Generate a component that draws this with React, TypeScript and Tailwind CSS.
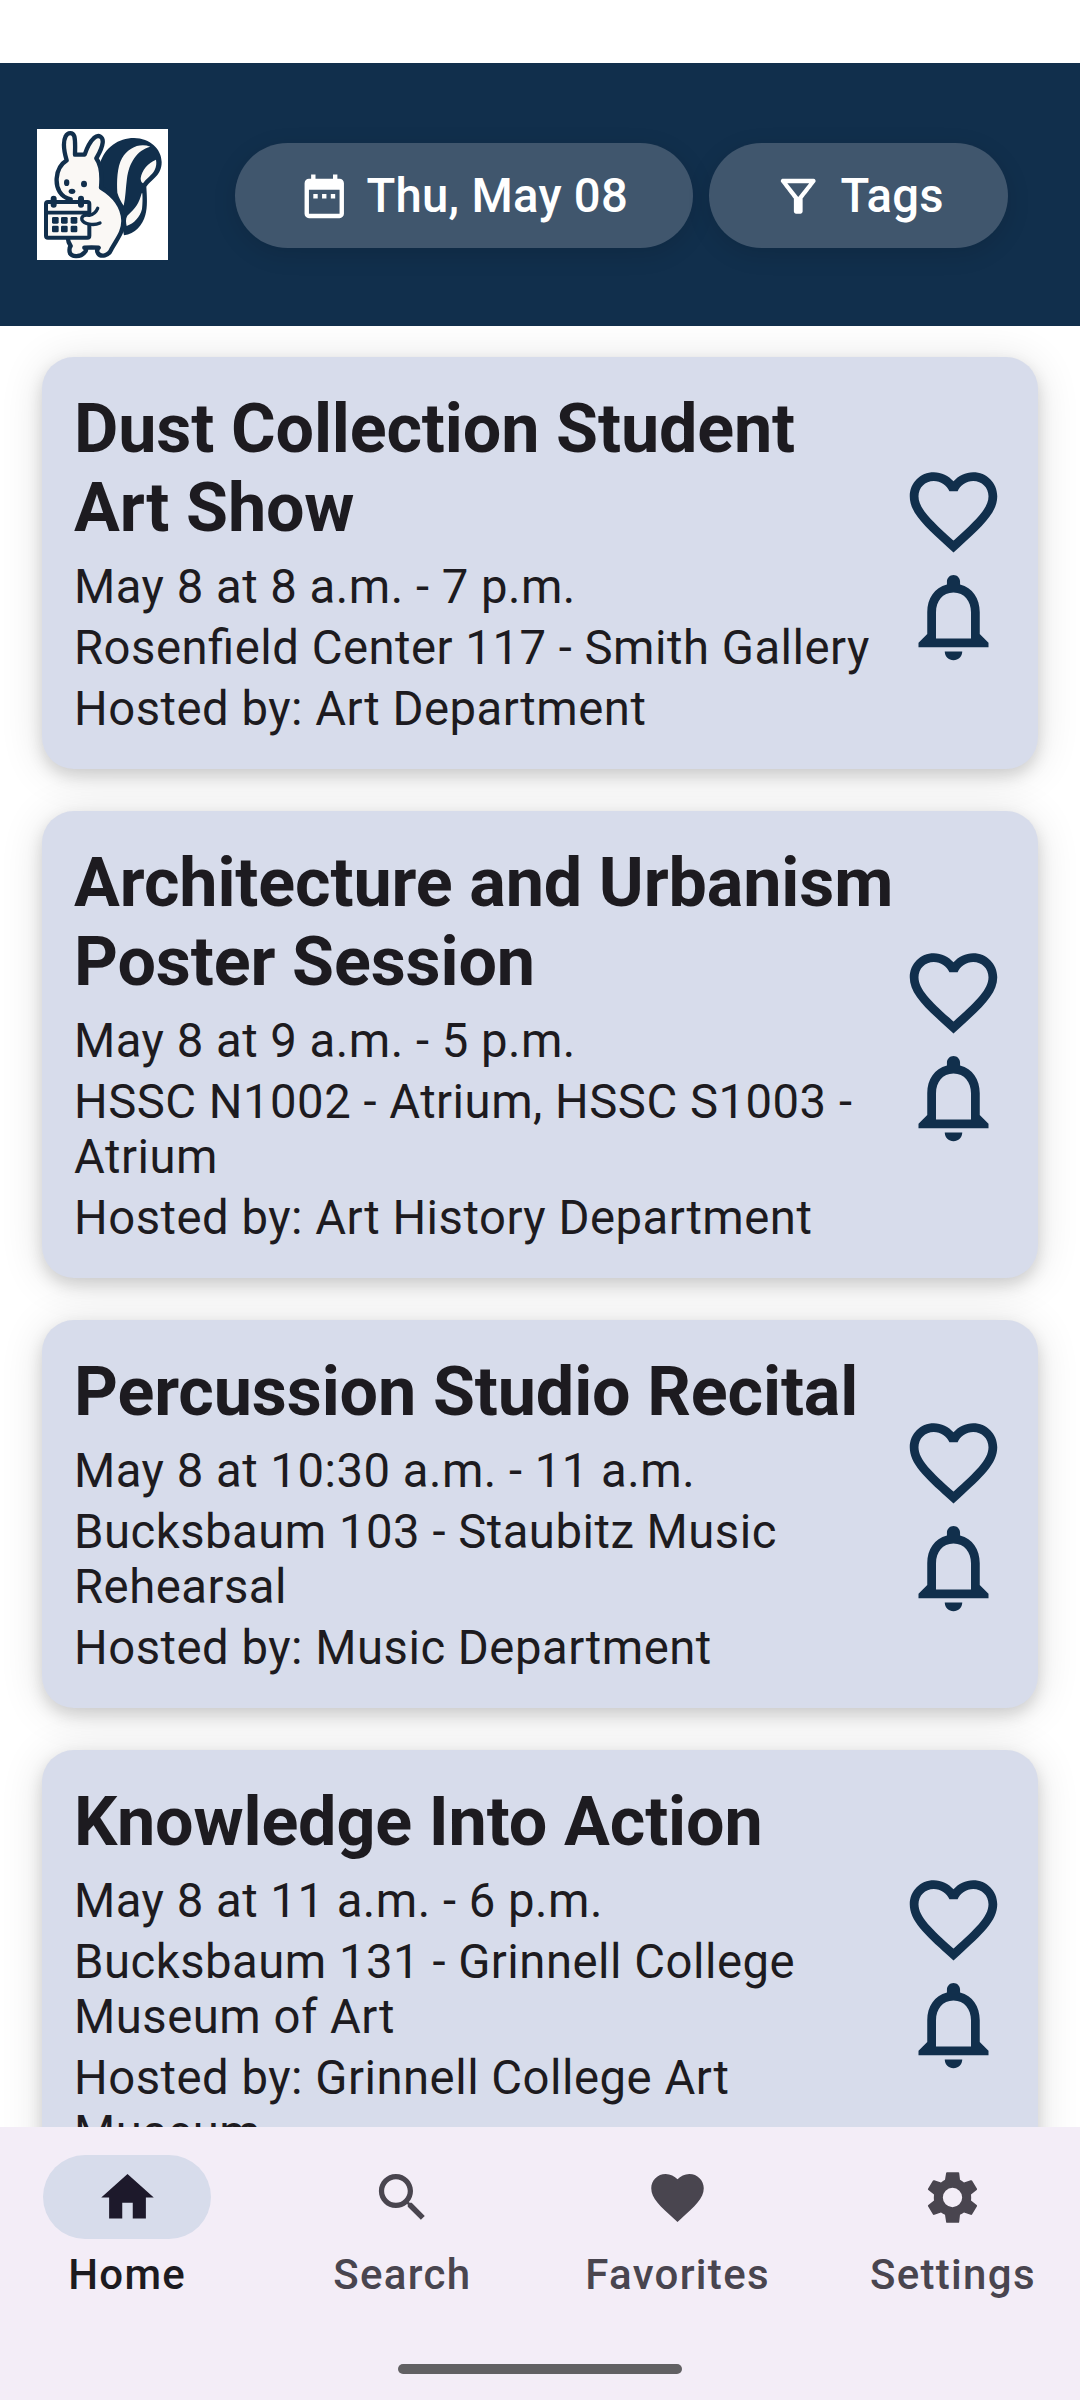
import { ReactNode } from 'react';

const NAVY = '#112f4c';

type Event = { title: string; time: string; place: string; host: string };

const events: Event[] = [
  {
    title: 'Dust Collection Student Art Show',
    time: 'May 8 at 8 a.m. - 7 p.m.',
    place: 'Rosenfield Center 117 - Smith Gallery',
    host: 'Hosted by: Art Department',
  },
  {
    title: 'Architecture and Urbanism Poster Session',
    time: 'May 8 at 9 a.m. - 5 p.m.',
    place: 'HSSC N1002 - Atrium, HSSC S1003 - Atrium',
    host: 'Hosted by: Art History Department',
  },
  {
    title: 'Percussion Studio Recital',
    time: 'May 8 at 10:30 a.m. - 11 a.m.',
    place: 'Bucksbaum 103 - Staubitz Music Rehearsal',
    host: 'Hosted by: Music Department',
  },
  {
    title: 'Knowledge Into Action',
    time: 'May 8 at 11 a.m. - 6 p.m.',
    place: 'Bucksbaum 131 - Grinnell College Museum of Art',
    host: 'Hosted by: Grinnell College Art Museum',
  },
];

function Icon({ d, className, viewBox = '0 0 24 24' }: { d: string; className: string; viewBox?: string }) {
  return (
    <svg viewBox={viewBox} fill="currentColor" fillRule="evenodd" className={className} aria-hidden="true">
      <path d={d} />
    </svg>
  );
}

const paths = {
  calendar:
    'M9 11H7v2h2v-2zm4 0h-2v2h2v-2zm4 0h-2v2h2v-2zm2-7h-1V2h-2v2H8V2H6v2H5c-1.11 0-1.99.9-1.99 2L3 20c0 1.1.89 2 2 2h14c1.1 0 2-.9 2-2V6c0-1.1-.9-2-2-2zm0 16H5V9h14v11z',
  filter:
    'M7 6h10l-5.01 6.3L7 6zm-2.75-.39C6.27 8.2 10 13 10 13v6c0 .55.45 1 1 1h2c.55 0 1-.45 1-1v-6s3.72-4.8 5.74-7.39A.998.998 0 0 0 18.95 4H5.04c-.83 0-1.3.95-.79 1.61z',
  heartOutline:
    'M16.5 3c-1.74 0-3.41.81-4.5 2.09C10.91 3.81 9.24 3 7.5 3 4.42 3 2 5.42 2 8.5c0 3.78 3.4 6.86 8.55 11.54L12 21.35l1.45-1.32C18.6 15.36 22 12.28 22 8.5 22 5.42 19.58 3 16.5 3zm-4.4 15.55-.1.1-.1-.1C7.14 14.24 4 11.39 4 8.5 4 6.5 5.5 5 7.5 5c1.54 0 3.04.99 3.57 2.36h1.87C13.46 5.99 14.96 5 16.5 5c2 0 3.5 1.5 3.5 3.5 0 2.89-3.14 5.74-7.9 10.05z',
  bell: 'M12 22c1.1 0 2-.9 2-2h-4c0 1.1.9 2 2 2zm6-6v-5c0-3.07-1.63-5.64-4.5-6.32V4c0-.83-.67-1.5-1.5-1.5s-1.5.67-1.5 1.5v.68C7.64 5.36 6 7.92 6 11v5l-2 2v1h16v-1l-2-2zm-2 1H8v-6c0-2.48 1.51-4.5 4-4.5s4 2.02 4 4.5v6z',
  home: 'M10 20v-6h4v6h5v-8h3L12 3 2 12h3v8z',
  search:
    'M15.5 14h-.79l-.28-.27C15.41 12.59 16 11.11 16 9.5 16 5.91 13.09 3 9.5 3S3 5.91 3 9.5 5.91 16 9.5 16c1.61 0 3.09-.59 4.23-1.57l.27.28v.79l5 4.99L20.49 19l-4.99-5zm-6 0C7.01 14 5 11.99 5 9.5S7.01 5 9.5 5 14 7.01 14 9.5 11.99 14 9.5 14z',
  heart:
    'M12 21.35l-1.45-1.32C5.4 15.36 2 12.28 2 8.5 2 5.42 4.42 3 7.5 3c1.74 0 3.41.81 4.5 2.09C13.09 3.81 14.76 3 16.5 3 19.58 3 22 5.42 22 8.5c0 3.78-3.4 6.86-8.55 11.54L12 21.35z',
  settings:
    'M141 66H175Q177 66 177.500 68L180 89Q186 92 192 97L212 90Q215 89.500 216 91L231 116Q232 118 230 119.500L213 133Q214 142 213 151L230 164.500Q232 166 231 168L216 193Q215 195 212 194L192 187Q186 191 180 194L177.500 216Q177 218 175 218H141Q139 218 138.500 216L135 194Q129 191 123 187L103 194Q100 195 99 193L84 168Q83 166 85 164.500L102 151Q101 142 102 133L85 119.500Q83 118 84 116L99 91Q100 89.500 103 90L123 97Q129 92 135 89L138.500 68Q139 66 141 66ZM157.500 113A29 29 0 1 0 157.500 171A29 29 0 1 0 157.500 113Z',
};

// Squirrel holding a calendar
function Logo() {
  const cream = '#faf8f5';
  return (
    <svg viewBox="51 57 393 393" className="size-[131px] shrink-0 bg-white" aria-label="Squirrel logo">
      <path
        d="M240 160C255 112 295 84 342 84C390 84 425 118 425 156C425 196 397 206 379 230C381 262 383 290 376 315C368 345 345 372 312 376L296 300L240 240Z"
        fill={NAVY}
      />
      <path d="M391 110C360 98 325 112 306 145C291 172 290 215 292 248C296 262 303 275 311 287C317 262 317 235 321 205C327 160 350 120 391 110Z" fill={cream} />
      <path d="M408 149C383 160 366 180 362 205C362 213 364 218 369 220C378 206 396 196 404 180C409 170 410 160 408 149Z" fill={cream} />
      <path d="M365 250C358 278 346 297 322 317C316 327 318 338 320 348C342 340 360 322 366 297C368 280 368 265 367 250Z" fill={cream} />
      <g fill={cream} stroke={NAVY} strokeWidth="13" strokeLinejoin="round" strokeLinecap="round">
        <path d="M140 151C132 124 127 98 137 79C143 66 159 66 163 79C167 96 165 116 165 134Q180 134 194 134C202 110 211 94 222 84C236 72 250 80 248 98C246 116 236 132 229 145C244 165 246 200 243 233C284 258 308 290 310 330C312 364 290 388 274 418C266 438 243 442 234 430Q228 421 236 413Q215 412 193 413Q204 418 193 428C182 442 152 442 149 426Q147 414 152 408Q144 396 143 382V290L152 268C122 262 108 236 110 205C112 178 122 162 140 151Z" />
        <rect x="78" y="276" width="130" height="107" rx="6" strokeWidth="12" />
        <path d="M78 308H206" strokeWidth="11" />
        <path d="M101 266V284M183 266V284" strokeWidth="18" />
      </g>
      <path d="M208 316C192 312 183 320 186 330C190 338 200 342 216 344V316Z" fill={cream} />
      <path
        d="M233 295C228 307 219 314 208 316C192 312 183 320 186 330C192 342 220 348 240 339"
        fill="none"
        stroke={NAVY}
        strokeWidth="10"
        strokeLinecap="round"
        strokeLinejoin="round"
      />
      <g fill={NAVY}>
        {[321, 347].map((y) =>
          [96, 123, 152].map((x) => <rect key={`${x}-${y}`} x={x} y={y} width="20" height="20" rx="4" />),
        )}
        <ellipse cx="140" cy="218" rx="8" ry="10" />
        <ellipse cx="192" cy="222" rx="9" ry="10" />
        <ellipse cx="156" cy="244" rx="10" ry="8" />
      </g>
    </svg>
  );
}

function PillButton({ icon, children, className }: { icon: string; children: ReactNode; className: string }) {
  return (
    <button
      className={`mt-px flex h-[105px] items-center rounded-full bg-[#40566d] pl-[63px] text-[47.25px] font-medium whitespace-nowrap text-white shadow-[0_6px_24px_rgba(0,0,0,0.12)] ${className}`}
    >
      <Icon d={icon} className="mt-[2px] size-[52.5px] shrink-0" />
      <span className="mt-[2px] ml-[16px] tracking-[0.26px]">{children}</span>
    </button>
  );
}

function EventCard({ event }: { event: Event }) {
  return (
    <article className="flex items-center justify-between rounded-[32px] bg-[#d7dceb] px-[32px] pt-[33px] pb-[32px] text-[#1d1b20] shadow-[0_7px_16px_rgba(0,0,0,0.14),0_4px_44px_rgba(0,0,0,0.12)]">
      <div className="flex w-[827px] flex-col gap-[6px] text-[47.25px] leading-[55px] tracking-[0.5px]">
        <h2 className="mb-[6px] text-[68.25px] leading-[79px] font-bold tracking-[-0.14px]">{event.title}</h2>
        <p>{event.time}</p>
        <p className="[font-feature-settings:'liga']">{event.place}</p>
        <p>{event.host}</p>
      </div>
      <div className="flex shrink-0 flex-col text-[#112f4c]">
        <Icon d={paths.heartOutline} className="size-[105px]" />
        <Icon d={paths.bell} className="size-[105px]" />
      </div>
    </article>
  );
}

function NavItem({ icon, label, active, viewBox }: { icon: string; label: string; active?: boolean; viewBox?: string }) {
  return (
    <div className={`flex flex-1 flex-col items-center ${active ? 'text-[#1d1b20]' : 'text-[#49454f]'}`}>
      <div
        className={`flex h-[84px] w-[168px] items-center justify-center rounded-full ${active ? 'bg-[#d7dceb] text-[#1d192b]' : ''}`}
      >
        <Icon d={icon} viewBox={viewBox} className="size-[63px]" />
      </div>
      <span className="mt-[11px] text-[42px] leading-[50px] font-medium tracking-[1.31px] whitespace-nowrap">{label}</span>
    </div>
  );
}

export default function App() {
  return (
    <div className="flex h-[2400px] w-[1080px] flex-col overflow-hidden bg-white font-[Roboto,sans-serif]">
      <div className="h-[63px] shrink-0" />
      <header className="z-10 flex h-[263px] shrink-0 items-center bg-[#112f4c] pl-[37px]">
        <Logo />
        <PillButton icon={paths.calendar} className="ml-[67px] w-[458px]">
          Thu, May 08
        </PillButton>
        <PillButton icon={paths.filter} className="ml-[16px] w-[299px]">
          Tags
        </PillButton>
      </header>
      <main className="flex min-h-0 flex-1 flex-col gap-[42px] overflow-hidden px-[42px] pt-[31px]">
        {events.map((event) => (
          <EventCard key={event.title} event={event} />
        ))}
      </main>
      <nav className="flex h-[273px] shrink-0 flex-col items-center bg-[#f3edf7]">
        <div className="flex w-full gap-[21px] pt-[28px]">
          <NavItem icon={paths.home} label="Home" active />
          <NavItem icon={paths.search} label="Search" />
          <NavItem icon={paths.heart} label="Favorites" />
          <NavItem icon={paths.settings} label="Settings" viewBox="63 47.5 189 189" />
        </div>
        <div className="mt-auto mb-[26px] h-[10px] w-[284px] rounded-full bg-[#616063]" />
      </nav>
    </div>
  );
}
